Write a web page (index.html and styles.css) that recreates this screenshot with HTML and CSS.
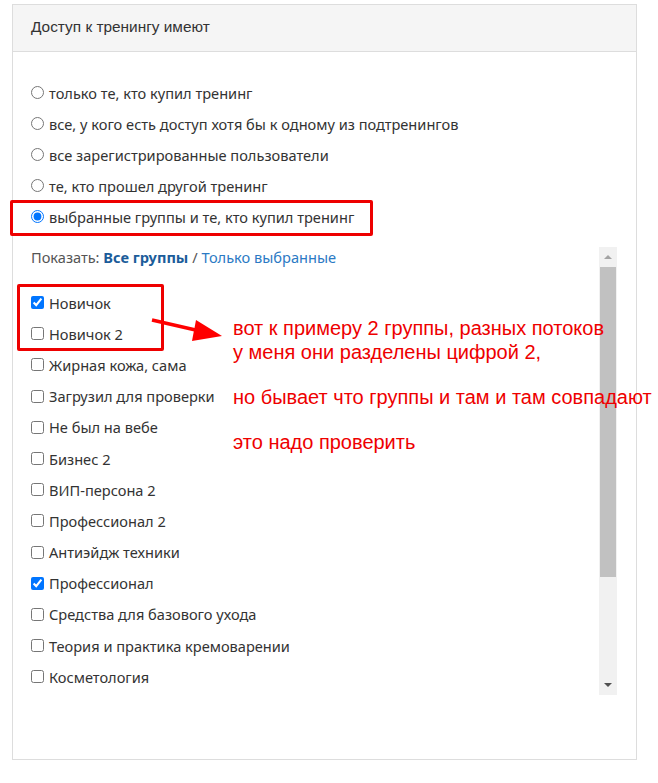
FILE: index.html
```html
<!DOCTYPE html>
<html lang="ru">
<head>
  <meta charset="UTF-8" />
  <title>Доступ к тренингу</title>
  <link rel="stylesheet" href="styles.css">
</head>
<body>

<div class="panel">
  <div class="panel-heading">Доступ к тренингу имеют</div>
  <div class="panel-body">
    <div class="radios">
      <label class="row"><input type="radio" name="access"> только те, кто купил тренинг</label>
      <label class="row"><input type="radio" name="access"> все, у кого есть доступ хотя бы к одному из подтренингов</label>
      <label class="row"><input type="radio" name="access"> все зарегистрированные пользователи</label>
      <label class="row"><input type="radio" name="access"> те, кто прошел другой тренинг</label>
      <label class="row"><input type="radio" name="access" checked> выбранные группы и те, кто купил тренинг</label>
    </div>

    <div class="groups">
      <div class="groups-list">
        <div class="show">Показать: <a class="active" href="#">Все группы</a> / <a href="#">Только выбранные</a></div>
        <label class="row"><input type="checkbox" checked> Новичок</label>
        <label class="row"><input type="checkbox"> Новичок 2</label>
        <label class="row"><input type="checkbox"> Жирная кожа, сама</label>
        <label class="row"><input type="checkbox"> Загрузил для проверки</label>
        <label class="row"><input type="checkbox"> Не был на вебе</label>
        <label class="row"><input type="checkbox"> Бизнес 2</label>
        <label class="row"><input type="checkbox"> ВИП-персона 2</label>
        <label class="row"><input type="checkbox"> Профессионал 2</label>
        <label class="row"><input type="checkbox"> Антиэйдж техники</label>
        <label class="row"><input type="checkbox" checked> Профессионал</label>
        <label class="row"><input type="checkbox"> Средства для базового ухода</label>
        <label class="row"><input type="checkbox"> Теория и практика кремоварении</label>
        <label class="row"><input type="checkbox"> Косметология</label>
      </div>
      <div class="scrollbar">
        <div class="arrow up"></div>
        <div class="track"><div class="thumb"></div></div>
        <div class="arrow down"></div>
      </div>
    </div>
  </div>
</div>

<!-- annotations drawn over the screenshot -->
<div class="mark mark-radio"></div>
<div class="mark mark-groups"></div>
<svg class="arrow-note" width="80" height="30" viewBox="0 0 80 30">
  <line x1="2" y1="6" x2="50" y2="17" stroke="#f00" stroke-width="3.5"/>
  <polygon points="46,6 72,22 42,27" fill="#f00"/>
</svg>
<div class="note">
  <p>вот к примеру 2 группы, разных потоков<br>у меня они разделены цифрой 2,</p>
  <p>но бывает что группы и там и там совпадают</p>
  <p>это надо проверить</p>
</div>

</body>
</html>
```

FILE: styles.css
```css
* {
  margin: 0;
  padding: 0;
  box-sizing: border-box;
}

body {
  font-family: 'Noto Sans', 'Open Sans', sans-serif;
  background: #fff;
  color: #333;
  position: relative;
  width: 658px;
  height: 783px;
}

.panel {
  margin: 4px 0 0 12px;
  width: 625px;
  height: 756px;
  border: 1px solid #ddd;
}

.panel-heading {
  height: 47px;
  background: #f5f5f5;
  border-bottom: 1px solid #ddd;
  padding: 13px 0 0 18px;
  font-family: 'Liberation Sans', Arial, sans-serif;
  font-size: 15.4px;
  color: #333;
}

.panel-body {
  padding: 25px 18px 0 18px;
}

.row {
  display: flex;
  align-items: center;
  height: 31px;
  font-size: 14.6px;
  color: #333;
}

.row input {
  margin: 0 5px 0 0;
  width: 13px;
  height: 13px;
  flex: none;
}

.groups {
  display: flex;
  margin-top: 15px;
  height: 448px;
}

.groups-list {
  flex: 1;
  overflow: hidden;
}

.show {
  font-size: 14.6px;
  color: #555;
  height: 20px;
  margin-bottom: 20px;
  line-height: 20px;
}

.show a {
  color: #2b7ac4;
  text-decoration: none;
}

.show a.active {
  color: #1b5c9a;
  font-weight: bold;
}

.groups-list .row {
  height: 31.2px;
}

.scrollbar {
  width: 18px;
  background: #f1f1f1;
  display: flex;
  flex-direction: column;
  margin-right: 1px;
}

.arrow {
  height: 20px;
  display: flex;
  justify-content: center;
  align-items: center;
}

.arrow.up::after {
  content: '';
  border-left: 4px solid transparent;
  border-right: 4px solid transparent;
  border-bottom: 4px solid #a3a3a3;
}

.arrow.down::after {
  content: '';
  border-left: 4px solid transparent;
  border-right: 4px solid transparent;
  border-top: 4px solid #505050;
}

.track {
  flex: 1;
}

.thumb {
  height: 310px;
  background: #c1c1c1;
  margin: 0 1px;
}

.mark {
  position: absolute;
  border: 3px solid #ee0000;
  border-radius: 2px;
}

.mark-radio {
  left: 10px;
  top: 200px;
  width: 363px;
  height: 36px;
}

.mark-groups {
  left: 17px;
  top: 284px;
  width: 147px;
  height: 67px;
}

.arrow-note {
  position: absolute;
  left: 150px;
  top: 314px;
}

.note {
  position: absolute;
  left: 233px;
  top: 316px;
  font-family: 'Liberation Sans', Arial, sans-serif;
  font-size: 20px;
  color: #ee0000;
  line-height: 24px;
}

.note p {
  margin-bottom: 21px;
}
```
